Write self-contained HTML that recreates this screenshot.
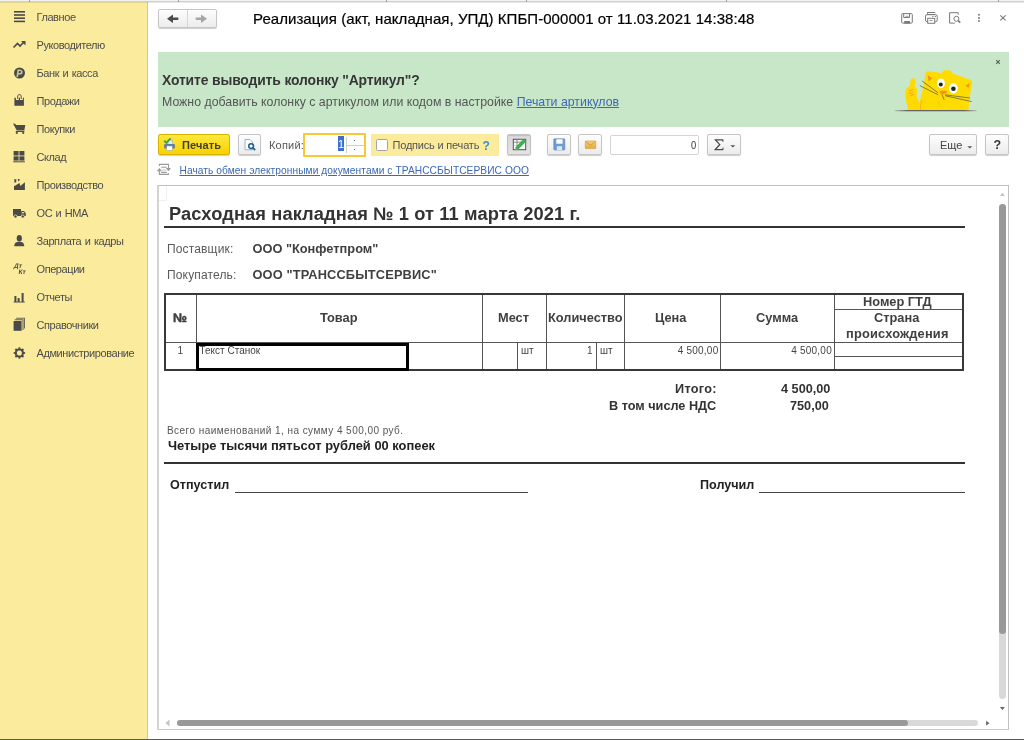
<!DOCTYPE html>
<html><head><meta charset="utf-8">
<style>
*{box-sizing:border-box;margin:0;padding:0}
html,body{width:1024px;height:740px;overflow:hidden;background:#fff;font-family:"Liberation Sans",sans-serif}
.a{position:absolute}
#root{will-change:transform;position:relative;width:1024px;height:740px;overflow:hidden;background:#fff}
#topbar{left:0;top:0;width:1024px;height:2px;background:#f3f3f3;border-bottom:1px solid #cfcfcf}
#side{left:0;top:2px;width:148px;height:737px;background:#fbeb9d;border-right:1px solid #d6c886}
.st{position:absolute;left:36.5px;height:28px;font-size:11px;color:#4d4d4d;letter-spacing:-0.42px;word-spacing:0.8px;line-height:28px;white-space:nowrap}
#botline{left:0;top:739px;width:1024px;height:1px;background:#595959}
.t{position:absolute;white-space:nowrap;line-height:1}
.btn{position:absolute;border:1px solid #c6c6c6;border-radius:2px;background:linear-gradient(#fdfdfd,#ececec);box-shadow:0 1px 1px rgba(0,0,0,.2)}
.vl{position:absolute;width:1px;background:#555}
.hl{position:absolute;height:1px;background:#555}
</style></head>
<body><div id="root">
<div class="a" id="topbar"></div>
<div class="a" id="side"></div>
<div class="a" style="left:0;top:2px;width:1024px;height:1px;background:rgba(0,0,0,.09)"></div>
<div class="a" style="left:29px;top:0;width:1px;height:2px;background:#9c9c9c"></div><div class="a" style="left:178px;top:0;width:1px;height:2px;background:#9c9c9c"></div><div class="a" style="left:386px;top:0;width:1px;height:2px;background:#9c9c9c"></div><div class="a" style="left:526px;top:0;width:1px;height:2px;background:#9c9c9c"></div><div class="a" style="left:726px;top:0;width:1px;height:2px;background:#9c9c9c"></div><div class="a" style="left:998px;top:0;width:1px;height:2px;background:#9c9c9c"></div>
<div class="st" style="top:3px">Главное</div>
<div class="st" style="top:31px">Руководителю</div>
<div class="st" style="top:59px">Банк и касса</div>
<div class="st" style="top:87px">Продажи</div>
<div class="st" style="top:115px">Покупки</div>
<div class="st" style="top:143px">Склад</div>
<div class="st" style="top:171px">Производство</div>
<div class="st" style="top:199px">ОС и НМА</div>
<div class="st" style="top:227px">Зарплата и кадры</div>
<div class="st" style="top:255px">Операции</div>
<div class="st" style="top:283px">Отчеты</div>
<div class="st" style="top:311px">Справочники</div>
<div class="st" style="top:339px">Администрирование</div>
<svg class="a" style="left:0;top:0" width="40" height="370" viewBox="0 0 40 370" fill="#4a4a4a">
 <!-- hamburger -->
 <rect x="14" y="11" width="11" height="1.6"/><rect x="14" y="14.2" width="11" height="1.6"/><rect x="14" y="17.4" width="11" height="1.6"/><rect x="14" y="20.6" width="11" height="1.6"/>
 <!-- trend -->
 <path d="M13.5 47.5 L17.5 43.5 L20 46 L23.5 42.5" stroke="#4a4a4a" stroke-width="1.7" fill="none"/>
 <path d="M21 41 L25.5 41 L25.5 45.5 Z"/>
 <!-- ruble -->
 <circle cx="19.5" cy="73" r="5.5"/>
 <path d="M17.2 77 L18.2 70.2 H19.9 A1.9 1.8 0 0 1 19.9 73.8 H17.7" stroke="#cdc48f" stroke-width="1.6" fill="none"/>
 <!-- bag -->
 <path d="M14.4 97.7 H15.9 V100 H18.8 V97.7 H20 V100 H22.8 V97.7 H23.9 V105.8 H14.4 Z"/>
 <path d="M17.7 99 V96.5 A1.75 2 0 0 1 21.2 96.5 V99" stroke="#6a6650" stroke-width="1.1" fill="none"/>
 <!-- cart -->
 <path d="M13 123.5 L15 123.8 L16.3 125 H25.3 L24.3 130.5 H16.8 Z"/>
 <rect x="15.8" y="131" width="8.6" height="1"/>
 <circle cx="16.8" cy="133" r="1.1"/><circle cx="23.2" cy="133" r="1.1"/>
 <!-- sklad -->
 <rect x="13.6" y="151" width="5" height="4.5"/><rect x="19.4" y="151" width="5" height="4.5"/>
 <rect x="13.6" y="156.3" width="5" height="4.3"/><rect x="19.4" y="156.3" width="5" height="4.3"/>
 <rect x="13.2" y="161.3" width="11.7" height="1"/>
 <!-- factory -->
 <path d="M14 186.2 L19.6 182.9 L20.3 185.9 L24.9 182.2 V189.9 H14 Z"/>
 <path d="M14.2 179.2 H16.4 L16.2 182 L14.6 183 Z M17.9 179.1 H19.8 L19.4 180.6 L18.1 181.4 Z"/>
 <!-- truck -->
 <path d="M13 209 H21 V216 H13 Z M21.2 211 H24 L25.8 213.3 V216 H21.2 Z"/>
 <circle cx="15.5" cy="216.5" r="1.6" stroke="#fbeb9d" stroke-width=".8"/><circle cx="22.8" cy="216.5" r="1.6" stroke="#fbeb9d" stroke-width=".8"/>
 <path d="M22 212 H23.6 L24.6 213.2 H22 Z" fill="#fbeb9d"/>
 <!-- person -->
 <ellipse cx="19.3" cy="238.2" rx="2.6" ry="3.2"/>
 <path d="M14.3 246.2 C14.3 242.5 16.5 241.8 19.3 241.8 C22 241.8 24.2 242.5 24.2 246.2 Z"/>
 <!-- dt kt -->
 <g font-family="Liberation Sans" font-weight="bold" font-size="6.6">
 <text transform="translate(13.6 268.2) skewX(-14)">Дт</text>
 <text transform="translate(18.2 274.4) skewX(-8)">Кт</text>
 </g>
 <!-- reports -->
 <rect x="14.4" y="296" width="2" height="6"/><rect x="17.6" y="298" width="2" height="4"/><rect x="21.6" y="293" width="2" height="9"/>
 <rect x="13.6" y="301.6" width="11.2" height=".9"/>
 <!-- books -->
 <path d="M16.2 317.8 H25 V328.5 H24 V318.8 H16.2 Z" opacity=".8"/>
 <path d="M14.8 319.3 H23.5 V330 H22.5 V320.3 H14.8 Z" opacity=".9"/>
 <rect x="13.6" y="321" width="8" height="9.8"/>
 <!-- gear -->
 <g transform="translate(19.4 353)">
  <circle r="3.8" fill="none" stroke="#4a4a4a" stroke-width="1.6"/>
  <g stroke="#4a4a4a" stroke-width="1.8">
   <line x1="0" y1="-5.7" x2="0" y2="5.7"/><line x1="-5.7" y1="0" x2="5.7" y2="0"/>
   <line x1="-4" y1="-4" x2="4" y2="4"/><line x1="-4" y1="4" x2="4" y2="-4"/>
  </g>
  <circle r="2.5" fill="#fbeb9d"/>
 </g>
</svg>

<!-- header -->
<div class="btn" style="left:158px;top:9px;width:59px;height:19px"></div>
<div class="a" style="left:187px;top:10px;width:1px;height:17px;background:#d6d6d6"></div>
<svg class="a" style="left:158px;top:9px" width="59" height="19" viewBox="0 0 59 19">
 <path d="M9 9.8 L15 5.6 V8.6 H20.3 V11 H15 V14 Z" fill="#4a4a4a"/>
 <path d="M49 9.8 L43 5.6 V8.6 H37.7 V11 H43 V14 Z" fill="#a6a6a6"/>
</svg>
<div class="t" style="left:253px;top:11px;font-size:15px;color:#000;letter-spacing:0.05px;-webkit-text-stroke:0.2px #000">Реализация (акт, накладная, УПД) КПБП-000001 от 11.03.2021 14:38:48</div>
<svg class="a" style="left:895px;top:8px" width="120" height="22" viewBox="0 0 120 22" fill="none" stroke="#7a7a7a" stroke-width="1">
 <rect x="6.7" y="5.6" width="10.6" height="9.5" rx="1"/><path d="M8.7 5.6 V9.5 H14.5 V5.6"/><path d="M10.5 8.3 H13.5" stroke="#999"/>
 <rect x="9.2" y="13" width="5.8" height="2.6" fill="#7a7a7a" stroke="none"/>
 <rect x="32.7" y="4.5" width="7" height="2"/><rect x="30.5" y="6.7" width="11.7" height="7" rx="1.5"/>
 <rect x="32.7" y="10.3" width="7" height="5" fill="#fff"/><path d="M34.5 12.5 H37.5" stroke="#999"/><path d="M37.4 8.5 H38.4 M39.8 8.5 H40.8" stroke="#666"/>
 <path d="M59.8 15.1 H54.6 V4.7 H63.2 V6.7"/><circle cx="61.4" cy="10.8" r="2.5"/><path d="M63.2 12.6 L65.2 14.6" stroke-width="1.6"/>
 <circle cx="84" cy="6.7" r="1" fill="#7a7a7a" stroke="none"/><circle cx="84" cy="9.9" r="1" fill="#7a7a7a" stroke="none"/><circle cx="84" cy="13.1" r="1" fill="#7a7a7a" stroke="none"/>
 <path d="M105.3 7.4 L110.6 12.4 M110.6 7.4 L105.3 12.4" stroke-width="1.1"/>
</svg>

<!-- banner -->
<div class="a" style="left:158px;top:52px;width:851px;height:75px;background:#c8e7c9"></div>
<div class="t" style="left:162px;top:71.8px;font-size:15.5px;font-weight:bold;color:#363636;letter-spacing:-0.15px;transform:scaleX(.896);transform-origin:0 0">Хотите выводить колонку "Артикул"?</div>
<div class="t" style="left:162px;top:94.8px;font-size:13.5px;color:#555;transform:scaleX(.913);transform-origin:0 0">Можно добавить колонку с артикулом или кодом в настройке <span style="color:#3d68b4;text-decoration:underline">Печати артикулов</span></div>
<svg class="a" style="left:994px;top:58px" width="8" height="8" viewBox="994 58 8 8"><path d="M996.2 60.2 L999.8 63.8 M999.8 60.2 L996.2 63.8" stroke="#5a5a5a" stroke-width="1.05"/></svg>
<!-- cat -->
<svg class="a" style="left:890px;top:64px" width="94" height="54" viewBox="0 0 94 54">
 <defs><linearGradient id="gl" x1="0" x2="1"><stop offset="0" stop-color="#777" stop-opacity=".3"/><stop offset=".15" stop-color="#666"/><stop offset=".85" stop-color="#666"/><stop offset="1" stop-color="#777" stop-opacity=".3"/></linearGradient></defs>
 <path d="M18 46.6 C17 40 15.5 35 15.3 29 C15.2 25 17 23 20 22 L20.5 16.5 C21 14 24.5 13.5 25.5 15.5 C26 17.5 25 20 24.5 22.5 C27 23.5 27.8 26 27 28.5 C26.5 31 26.5 34 28.6 37 C30 40 30 43 30 46.6 Z" fill="#ffd900"/>
 <path d="M19 27 L23.5 25.5 M18.5 29.5 L23 28.5 M20 31.5 L24 30.5" stroke="#f7a81b" stroke-width="1.1"/>
 <path d="M27.5 46.6 C29 38 32 30 33.5 22 C34.5 16 35 10 36.7 7.3 C42 7 47 8 51 9.5 C53 7 54.5 5.8 55.5 6 C57 6.5 57.5 6.5 59.5 6 C61 7 62 8 63 9.8 C70 12 76 14 82.2 16.5 C81 25 79.5 33 78.5 46.6 Z" fill="#ffdc00"/>
 <path d="M37.6 11 L42.2 14.5 L38.5 17.5 Z M80 19 L75.3 21.8 L78.5 24 Z" fill="#f7941d"/>
 <path d="M30.5 46.6 C30 42 30.5 39 32 36" stroke="#f7a81b" stroke-width=".8" fill="none"/>
 <ellipse cx="51" cy="19.3" rx="3.9" ry="4.9" fill="#fff"/><ellipse cx="63.4" cy="24.3" rx="4.3" ry="5.1" fill="#fff"/>
 <circle cx="50.8" cy="20.6" r="2" fill="#222"/><circle cx="63.4" cy="24.8" r="2.3" fill="#222"/>
 <path d="M49.6 27.5 C52 26 55.5 26.3 57.4 28 C56 30 53.5 30.5 52 30.3 C50.5 30 49.6 29 49.6 27.5 Z" fill="#f7941d"/>
 <path d="M32.1 17 L48.2 28.9 M29.8 21.6 L48.2 30.8 M55.1 31.7 L81.7 37.6 M55.1 30.8 L79.9 34 M52 30.5 L54.2 35.8" stroke="#555" stroke-width=".7" fill="none"/>
 <path d="M47.8 36.5 C48.5 39 49.5 41 51.5 42.3" stroke="#f7c11d" stroke-width=".9" fill="none"/>
 <rect x="4.6" y="46" width="82.2" height="1.3" fill="url(#gl)"/>
</svg>

<!-- toolbar -->
<div class="a" style="left:158px;top:134px;width:72px;height:21px;border:1px solid #d6b400;border-radius:2px;background:linear-gradient(#ffe83c,#f7d200);box-shadow:0 1px 1px rgba(0,0,0,.2)"></div>
<svg class="a" style="left:162px;top:137px" width="16" height="15" viewBox="0 0 16 15">
 <rect x="6" y="3" width="4.5" height="4.5" fill="#e8e8e8" stroke="#999" stroke-width=".5"/>
 <rect x="2.1" y="7" width="10.8" height="4.5" rx="1" fill="#5b7fa6"/>
 <rect x="4.8" y="9" width="5.4" height="4.4" fill="#fff" stroke="#8fa3b8" stroke-width=".5"/>
 <path d="M2.2 3.6 L4.4 5.8 L8.6 1.4" stroke="#33aa44" stroke-width="1.9" fill="none"/>
</svg>
<div class="t" style="left:182px;top:140px;font-size:11px;font-weight:bold;color:#3d3d3d;letter-spacing:0.1px">Печать</div>
<div class="btn" style="left:238px;top:134px;width:23px;height:21px"></div>
<svg class="a" style="left:243px;top:137px" width="14" height="15" viewBox="0 0 14 15">
 <path d="M2 2.5 H7 L9.5 5 V12.8 H2 Z" fill="#fff" stroke="#9fb2c4" stroke-width="1"/>
 <circle cx="8.1" cy="9.1" r="2.4" fill="#fff" stroke="#1f5b8c" stroke-width="1.5"/><path d="M9.8 10.8 L12.2 13" stroke="#1f5b8c" stroke-width="1.7"/>
</svg>
<div class="t" style="left:269px;top:140px;font-size:11px;color:#555;letter-spacing:0.2px">Копий:</div>
<div class="a" style="left:303px;top:133px;width:63px;height:24px;border:2px solid #f7c934;background:#fff;border-radius:1px"></div>
<div class="a" style="left:338px;top:136px;width:6px;height:15px;background:#3c6fcf"></div>
<div class="t" style="left:338px;top:139px;font-size:11px;color:#fff">1</div>
<div class="a" style="left:346px;top:137px;width:1px;height:16px;background:#ccc"></div>
<div class="a" style="left:347px;top:145px;width:17px;height:1px;background:#ccc"></div>
<div class="a" style="left:354px;top:140px;width:1px;height:1px;background:#666"></div>
<div class="a" style="left:354px;top:149px;width:1px;height:1px;background:#666"></div>
<div class="a" style="left:371px;top:134px;width:128px;height:22px;background:#fbeb9d"></div>
<div class="a" style="left:376px;top:139px;width:12px;height:12px;border:1px solid #a3a3ab;background:#fff;border-radius:1.5px"></div>
<div class="t" style="left:392.5px;top:140px;font-size:11px;color:#555;letter-spacing:-0.2px">Подпись и печать</div>
<div class="t" style="left:482.5px;top:140px;font-size:12px;font-weight:bold;color:#3f8ccb">?</div>
<div class="a" style="left:507px;top:134px;width:24px;height:21px;border:1px solid #c2c2c2;border-radius:2px;background:linear-gradient(#d9d9d9,#e3e3e3);box-shadow:inset 0 1px 1px rgba(0,0,0,.12),0 1px 1px rgba(0,0,0,.2)"></div>

<div class="btn" style="left:547px;top:134px;width:24px;height:21px"></div>

<div class="btn" style="left:578px;top:134px;width:24px;height:21px"></div>
<svg class="a" style="left:505px;top:132px" width="100" height="26" viewBox="505 132 100 26">
 <rect x="513.3" y="139.3" width="12.4" height="10.4" fill="#fafafa" stroke="#555" stroke-width="1"/>
 <path d="M513.5 142.2 H525.5 M517 139.5 V149.5" stroke="#777" stroke-width=".8"/><path d="M513.5 145.5 H522 M521 139.5 V146" stroke="#bbb" stroke-width=".6"/>
 <path d="M517.2 148 L523.6 141.6" stroke="#3fae52" stroke-width="3.6" stroke-linecap="round"/>
 <path d="M514.8 150.6 L516 148.2 L517.4 149.6 Z" fill="#b89a3a"/>
 <rect x="553.8" y="138.8" width="11" height="11.2" rx=".8" fill="#6e9bd2" stroke="#5583bd" stroke-width=".6"/>
 <rect x="556.3" y="139.3" width="6.3" height="4.4" fill="#fff"/><rect x="556.8" y="146.2" width="5.3" height="3.8" fill="#dfe6ee"/>
 <defs><linearGradient id="env" x1="0" y1="0" x2="0" y2="1"><stop offset="0" stop-color="#f7d27a"/><stop offset="1" stop-color="#e2a93a"/></linearGradient></defs>
 <rect x="585.3" y="141" width="10.5" height="7.6" rx=".6" fill="url(#env)" stroke="#cf9a33" stroke-width=".6"/>
 <path d="M585.6 141.4 L590.55 145.4 L595.5 141.4" stroke="#c58d2a" stroke-width=".7" fill="none"/>
</svg>

<div class="a" style="left:610px;top:135px;width:89px;height:20px;border:1px solid #d5d5d5;border-radius:2px;background:#fff"></div>
<div class="t" style="left:690.5px;top:139.5px;font-size:11px;color:#333;transform:scaleX(.85);transform-origin:left">0</div>
<div class="btn" style="left:707px;top:134px;width:34px;height:21px"></div>
<svg class="a" style="left:710px;top:136px" width="18" height="18" viewBox="710 136 18 18"><path d="M714.4 139.2 H723.3 L723.5 141.8 H722.6 L722.1 140.6 H716.9 L720.6 144.7 L716.6 149 H722.3 L722.8 147.6 H723.6 L723.3 150.3 H714.2 V149.7 L718.9 144.6 L714.4 139.8 Z" fill="#4a4a4a"/></svg>
<svg class="a" style="left:730px;top:145px" width="6" height="4"><path d="M0.3 0.3 H5.3 L2.8 2.5 Z" fill="#555"/></svg>
<div class="btn" style="left:929px;top:134px;width:48px;height:21px"></div>
<div class="t" style="left:940px;top:140px;font-size:11px;color:#444">Еще</div>
<svg class="a" style="left:967px;top:145.5px" width="6" height="4"><path d="M0.4 0.3 H5.2 L2.8 2.4 Z" fill="#555"/></svg>
<div class="btn" style="left:985px;top:134px;width:24px;height:21px"></div>
<div class="t" style="left:993.5px;top:138.5px;font-size:12.5px;font-weight:bold;color:#333">?</div>

<!-- link row -->
<svg class="a" style="left:155px;top:160px" width="20" height="20" viewBox="155 160 20 20" fill="none" stroke="#9a9a9a" stroke-width="1.1">
 <path d="M159.4 166 V164.4 H168.5 V169"/><path d="M167.1 168.6 L168.5 170.4 L169.9 168.6 Z" fill="#9a9a9a"/>
 <path d="M168.5 173.2 V174.4 H159.4 V170.2"/><path d="M158 170.6 L159.4 168.9 L160.8 170.6 Z" fill="#9a9a9a"/>
 <path d="M161.2 167.3 H166.7 M161.2 172.4 H166.7"/><path d="M161.5 170 H166.5" stroke="#c8c8c8"/>
</svg>
<div class="t" style="left:179.5px;top:166px;font-size:10.2px;color:#3d68b4;text-decoration:underline;letter-spacing:0.07px">Начать обмен электронными документами с ТРАНССБЫТСЕРВИС ООО</div>

<!-- document frame -->
<div class="a" style="left:157px;top:185px;width:852px;height:545px;border:1px solid #c0c0c0;border-left:2px solid #d4d4d4;border-bottom:1.5px solid #c8c8c8;border-radius:0 0 1px 1px"></div>
<div class="a" style="left:159px;top:186px;width:8px;height:15px;border-right:1px solid #f0f0f0;border-bottom:1px solid #f0f0f0"></div>
<!-- scrollbars -->
<svg class="a" style="left:995px;top:190px" width="12" height="10" viewBox="995 190 12 10"><path d="M999.9 196.1 H1005 L1002.45 192.8 Z" fill="#c4c4c4"/></svg>
<div class="a" style="left:999px;top:204px;width:7px;height:495px;border-radius:3.5px;background:#d9d9d9"></div>
<div class="a" style="left:999px;top:204px;width:7px;height:430px;border-radius:3.5px;background:#999"></div>
<svg class="a" style="left:995px;top:704px" width="12" height="10" viewBox="995 704 12 10"><path d="M999.9 707.1 H1004.9 L1002.4 710.1 Z" fill="#666"/></svg>
<svg class="a" style="left:163px;top:718px" width="8" height="10"><path d="M6.5 1.5 V8.5 L2.5 5 Z" fill="#c4c4c4"/></svg>
<div class="a" style="left:177px;top:720px;width:801px;height:6px;border-radius:3px;background:#d9d9d9"></div>
<div class="a" style="left:177px;top:720px;width:731px;height:6px;border-radius:3px;background:#999"></div>
<svg class="a" style="left:983px;top:718px" width="10" height="10" viewBox="983 718 10 10"><path d="M986.1 720.8 V725.5 L989.5 723.15 Z" fill="#666"/></svg>

<!-- document content -->
<div class="t" style="left:169px;top:205px;font-size:18.3px;font-weight:bold;color:#333;letter-spacing:0.1px">Расходная накладная № 1 от 11 марта 2021 г.</div>
<div class="a" style="left:164px;top:226px;width:801px;height:2px;background:#333"></div>
<div class="t" style="left:167px;top:243px;font-size:12px;color:#5a5a5a;letter-spacing:0.15px">Поставщик:</div>
<div class="t" style="left:252.5px;top:243px;font-size:12.8px;font-weight:bold;color:#404040">ООО "Конфетпром"</div>
<div class="t" style="left:167px;top:269px;font-size:12px;color:#5a5a5a;letter-spacing:0.15px">Покупатель:</div>
<div class="t" style="left:252.5px;top:269px;font-size:12.8px;font-weight:bold;color:#404040;letter-spacing:0.15px">ООО "ТРАНССБЫТСЕРВИС"</div>

<!-- table -->
<div class="a" style="left:164px;top:293px;width:800px;height:78px;border:2px solid #393939"></div>
<div class="vl" style="left:196px;top:295px;height:74px"></div>
<div class="vl" style="left:482px;top:295px;height:74px"></div>
<div class="vl" style="left:546px;top:295px;height:74px"></div>
<div class="vl" style="left:624px;top:295px;height:74px"></div>
<div class="vl" style="left:720px;top:295px;height:74px"></div>
<div class="vl" style="left:834px;top:295px;height:74px"></div>
<div class="vl" style="left:517px;top:343px;height:26px"></div>
<div class="vl" style="left:596px;top:343px;height:26px"></div>
<div class="hl" style="left:166px;top:342px;width:796px"></div>
<div class="hl" style="left:834px;top:309px;width:128px"></div>
<div class="hl" style="left:834px;top:356px;width:128px"></div>
<div class="a" style="left:196px;top:343px;width:213px;height:28px;border:3px solid #000"></div>
<div class="t" style="left:173px;top:312px;font-size:12.5px;font-weight:bold;color:#404040;-webkit-text-stroke:0.5px #404040">№</div>
<div class="t" style="left:320px;top:312px;font-size:12.8px;font-weight:bold;color:#404040">Товар</div>
<div class="t" style="left:498px;top:312px;font-size:12.8px;font-weight:bold;color:#404040">Мест</div>
<div class="t" style="left:548px;top:312px;font-size:12.8px;font-weight:bold;color:#404040">Количество</div>
<div class="t" style="left:655px;top:312px;font-size:12.8px;font-weight:bold;color:#404040">Цена</div>
<div class="t" style="left:756px;top:312px;font-size:12.8px;font-weight:bold;color:#404040">Сумма</div>
<div class="t" style="left:863px;top:296px;font-size:12.8px;font-weight:bold;color:#404040">Номер ГТД</div>
<div class="t" style="left:874px;top:312px;font-size:12.8px;font-weight:bold;color:#404040">Страна</div>
<div class="t" style="left:846px;top:328px;font-size:12.8px;font-weight:bold;color:#404040;letter-spacing:0.2px">происхождения</div>
<div class="t" style="left:177.5px;top:346px;font-size:10px;color:#444">1</div>
<div class="t" style="left:199.5px;top:346px;font-size:10px;color:#444">Текст Станок</div>
<div class="t" style="left:521px;top:346px;font-size:10px;color:#444">шт</div>
<div class="t" style="left:587px;top:346px;font-size:10px;color:#444">1</div>
<div class="t" style="left:600px;top:346px;font-size:10px;color:#444">шт</div>
<div class="t" style="right:305.5px;top:346px;font-size:10px;color:#444;letter-spacing:0.25px;word-spacing:-0.2px">4 500,00</div>
<div class="t" style="right:192px;top:346px;font-size:10px;color:#444;letter-spacing:0.25px;word-spacing:-0.2px">4 500,00</div>

<div class="t" style="left:675px;top:383px;font-size:12.7px;font-weight:bold;color:#333;letter-spacing:0.3px">Итого:</div>
<div class="t" style="left:781px;top:383px;font-size:12.7px;font-weight:bold;color:#333">4 500,00</div>
<div class="t" style="left:609px;top:400px;font-size:12.7px;font-weight:bold;color:#333">В том числе НДС</div>
<div class="t" style="left:790px;top:400px;font-size:12.7px;font-weight:bold;color:#333">750,00</div>
<div class="t" style="left:167px;top:426px;font-size:10px;color:#555;letter-spacing:0.45px">Всего наименований 1, на сумму 4 500,00 руб.</div>
<div class="t" style="left:168px;top:440px;font-size:12.9px;font-weight:bold;color:#222">Четыре тысячи пятьсот рублей 00 копеек</div>
<div class="a" style="left:164px;top:462px;width:801px;height:2px;background:#333"></div>
<div class="t" style="left:170px;top:479px;font-size:12.6px;font-weight:bold;color:#222">Отпустил</div>
<div class="a" style="left:235px;top:492px;width:293px;height:1px;background:#444"></div>
<div class="t" style="left:700px;top:479px;font-size:12.6px;font-weight:bold;color:#222">Получил</div>
<div class="a" style="left:759px;top:492px;width:206px;height:1px;background:#444"></div>

<div class="a" id="botline"></div>
</div></body></html>
